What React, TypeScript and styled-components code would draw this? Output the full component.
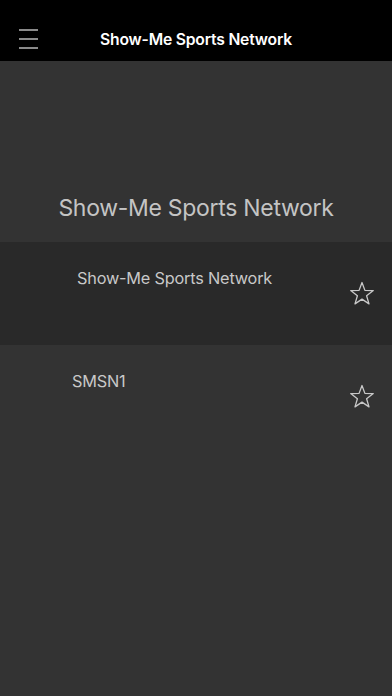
import styled, { createGlobalStyle } from "styled-components"

const GlobalStyle = createGlobalStyle`
  html, body {
    margin: 0;
    padding: 0;
    background: #333333;
    font-family: Inter, "Liberation Sans", Arial, sans-serif;
  }
`

const channels = [
  { id: 1, name: "Show-Me Sports Network", active: true, indent: 77 },
  { id: 2, name: "SMSN1", active: false, indent: 72 },
]

const StarIcon = () => (
  <svg width="26" height="25" viewBox="0 0 26 25" fill="none">
    <path
      d="M13 1.5 L15.9 9.4 L24.3 9.6 L17.6 14.8 L20 22.9 L13 18.1 L6 22.9 L8.4 14.8 L1.7 9.6 L10.1 9.4 Z"
      stroke="#c8c8c8"
      strokeWidth="1.3"
      strokeLinejoin="round"
    />
  </svg>
)

const App = () => {
  return (
    <>
      <GlobalStyle />
      <Page>
        <Header>
          <Hamburger>
            <span />
            <span />
            <span />
          </Hamburger>
          <HeaderTitle>Show-Me Sports Network</HeaderTitle>
        </Header>
        <Hero>Show-Me Sports Network</Hero>
        <ul>
          {channels.map((c) => (
            <Row key={c.id} $active={c.active}>
              <RowText $indent={c.indent}>{c.name}</RowText>
              <StarButton>
                <StarIcon />
              </StarButton>
            </Row>
          ))}
        </ul>
      </Page>
    </>
  )
}

export default App

const Page = styled.div`
  width: 392px;
  min-height: 696px;
  background: #333333;

  ul {
    list-style: none;
    margin: 0;
    padding: 0;
  }
`

const Header = styled.header`
  position: relative;
  height: 61px;
  background: #000;
  display: flex;
  align-items: center;
  justify-content: center;
`

const Hamburger = styled.div`
  position: absolute;
  left: 19px;
  top: 29px;
  display: flex;
  flex-direction: column;
  gap: 7px;

  span {
    display: block;
    width: 19px;
    height: 2px;
    background: #8a8a8a;
  }
`

const HeaderTitle = styled.h1`
  margin: 0;
  padding-top: 18px;
  font-size: 15.7px;
  font-weight: 600;
  color: #fff;
  letter-spacing: -0.2px;
`

const Hero = styled.h2`
  margin: 0;
  height: 181px;
  box-sizing: border-box;
  padding-top: 133px;
  text-align: center;
  font-size: 23px;
  font-weight: 400;
  color: #c4c4c4;
  letter-spacing: -0.3px;
`

const Row = styled.li<{ $active: boolean }>`
  height: 103px;
  background: ${(p) => (p.$active ? "#292929" : "#333333")};
  display: flex;
  align-items: flex-start;
  justify-content: space-between;
`

const RowText = styled.span<{ $indent: number }>`
  margin-left: ${(p) => p.$indent}px;
  margin-top: 26px;
  font-size: 16.3px;
  color: #c8c8c8;
  letter-spacing: -0.2px;
`

const StarButton = styled.div`
  margin-top: 39px;
  margin-right: 17px;
  display: flex;
`
